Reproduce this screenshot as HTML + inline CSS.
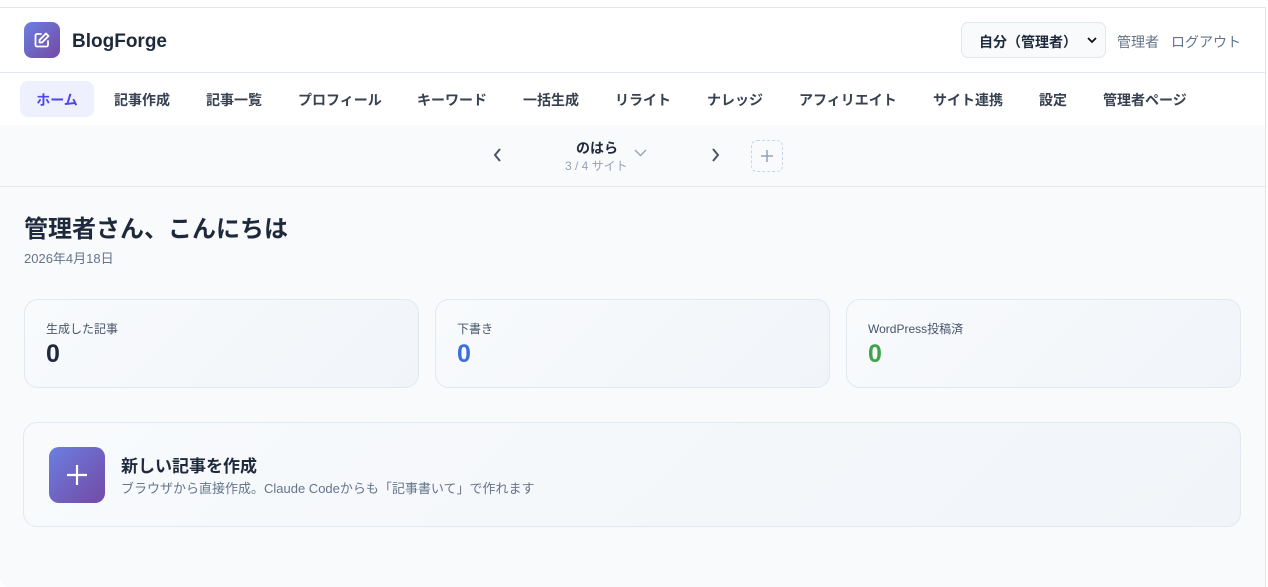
<!DOCTYPE html>
<html><head><meta charset="utf-8"><style>
*{box-sizing:border-box;margin:0;padding:0}
body{width:1268px;height:574px;overflow:hidden;background:#fff;font-family:"Liberation Sans","Noto Sans CJK JP",sans-serif;position:relative}
.frame{position:absolute;left:0;top:7px;width:1266px;height:580px;border-top:1px solid #e2e4e8;border-right:1px solid #e2e4e8;background:#f8fafc;border-bottom-left-radius:10px}
.hdr{height:65px;background:#fff;border-bottom:1px solid #e2e8f0;position:relative}
.logo{position:absolute;left:24px;top:14px;width:36px;height:36px;border-radius:8px;background:linear-gradient(135deg,#6b7fe0,#7449a6)}
.brand{position:absolute;left:72px;top:23px;font-size:19px;font-weight:700;color:#1e293b}
.sel{position:absolute;left:961px;top:14px;width:145px;height:36px;border:1px solid #e2e8f0;border-radius:7px;background:#f8fafc;font-size:14px;font-weight:600;color:#1e293b;padding:9px 0 0 17px}
.sel svg{position:absolute;right:8px;top:13px}
.hl{position:absolute;top:24px;font-size:14px;color:#64748b}
.nav{height:52px;background:#fff;position:relative}
.nav span{position:absolute;top:17px;font-size:14px;font-weight:600;color:#374151}
.nav .on{left:20px;top:8px;width:74px;height:36px;border-radius:8px;background:#eef0fe;color:#4f46e5;padding-top:9px;text-align:center}
.sw{height:62px;border-bottom:1px solid #e5e7eb;position:relative}
.t{position:absolute}
.card{position:absolute;top:291px;width:395px;height:89px;border:1px solid #e2e8f0;border-radius:14px;background:linear-gradient(135deg,#f8fafc,#f1f5f9)}
.card .l{position:absolute;left:21px;top:20px;font-size:12px;color:#475569}
.card .v{position:absolute;left:21px;top:40px;font-size:25px;font-weight:700;color:#1e293b}
</style></head><body>
<div class="frame">
<div class="hdr">
<div class="logo"><svg width="36" height="36" viewBox="0 0 36 36"><path d="M17 12h-4a1.5 1.5 0 0 0-1.5 1.5v9.5a1.5 1.5 0 0 0 1.5 1.5h9.5a1.5 1.5 0 0 0 1.5-1.5v-4" fill="none" stroke="#fff" stroke-width="1.8" stroke-linecap="round"/><path d="M22 11.5l2.5 2.5-6.5 6.5h-2.5v-2.5z" fill="none" stroke="#fff" stroke-width="1.8" stroke-linejoin="round"/></svg></div>
<div class="brand">BlogForge</div>
<div class="sel">自分（管理者）<svg width="10" height="8" viewBox="0 0 10 8"><path d="M1 2l4 4 4-4" fill="none" stroke="#111" stroke-width="1.8"/></svg></div>
<div class="hl" style="left:1117px">管理者</div>
<div class="hl" style="left:1171px">ログアウト</div>
</div>
<div class="nav">
<span class="on">ホーム</span>
<span style="left:114px">記事作成</span><span style="left:206px">記事一覧</span><span style="left:298px">プロフィール</span><span style="left:417px">キーワード</span><span style="left:523px">一括生成</span><span style="left:615px">リライト</span><span style="left:707px">ナレッジ</span><span style="left:799px">アフィリエイト</span><span style="left:933px">サイト連携</span><span style="left:1039px">設定</span><span style="left:1103px">管理者ページ</span>
</div>
<div class="sw">
<svg class="t" style="left:493px;top:23px" width="10" height="14" viewBox="0 0 10 14"><path d="M7 1L2 7l5 6" fill="none" stroke="#475569" stroke-width="2"/></svg>
<div class="t" style="left:576px;top:13px;font-size:14px;font-weight:700;color:#1e293b">のはら</div>
<div class="t" style="left:565px;top:32px;font-size:12px;color:#94a3b8">3 / 4 サイト</div>
<svg class="t" style="left:634px;top:24px" width="13" height="8" viewBox="0 0 13 8"><path d="M1 1l5.5 5.5L12 1" fill="none" stroke="#94a3b8" stroke-width="1.4"/></svg>
<svg class="t" style="left:710px;top:23px" width="10" height="14" viewBox="0 0 10 14"><path d="M3 1l5 6-5 6" fill="none" stroke="#475569" stroke-width="2"/></svg>
<div class="t" style="left:751px;top:15px;width:32px;height:32px;border:1px dashed #cbd5e1;border-radius:6px"><svg width="30" height="30" viewBox="0 0 30 30"><path d="M15 9v12M9 15h12" stroke="#94a3b8" stroke-width="1.5"/></svg></div>
</div>
<div class="t" style="left:24px;top:201px;font-size:24px;font-weight:700;color:#1e293b">管理者さん、こんにちは</div>
<div class="t" style="left:24px;top:240px;font-size:13px;color:#64748b">2026年4月18日</div>
<div class="card" style="left:24px"><div class="l">生成した記事</div><div class="v">0</div></div>
<div class="card" style="left:435px"><div class="l">下書き</div><div class="v" style="color:#3b6fe0">0</div></div>
<div class="card" style="left:846px"><div class="l">WordPress投稿済</div><div class="v" style="color:#3fa34d">0</div></div>
<div class="t" style="left:23px;top:414px;width:1218px;height:105px;border:1px solid #e2e8f0;border-radius:14px;background:linear-gradient(135deg,#f8fafc,#f1f5f9)">
<div class="t" style="left:25px;top:24px;width:56px;height:56px;border-radius:10px;background:linear-gradient(135deg,#6b7fe0,#7449a6)"><svg width="56" height="56" viewBox="0 0 56 56"><path d="M28 18v20M18 28h20" stroke="#fff" stroke-width="2.2"/></svg></div>
<div class="t" style="left:97px;top:29px;font-size:17px;font-weight:700;color:#1e293b">新しい記事を作成</div>
<div class="t" style="left:97px;top:55px;font-size:13px;color:#64748b">ブラウザから直接作成。Claude Codeからも「記事書いて」で作れます</div>
</div>
</div>
</body></html>
